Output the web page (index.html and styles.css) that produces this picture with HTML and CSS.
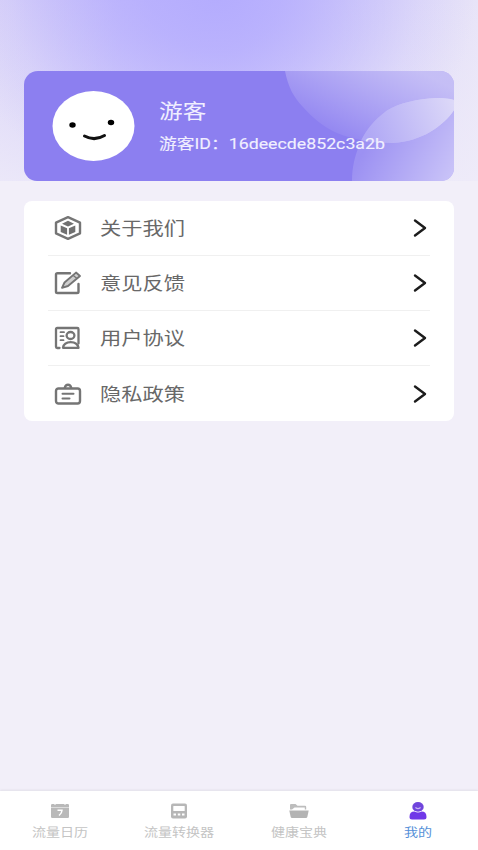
FILE: index.html
```html
<!DOCTYPE html>
<html lang="zh-CN">
<head>
<meta charset="utf-8">
<title>我的</title>
<link rel="stylesheet" href="styles.css">
</head>
<body>
<div class="screen">
  <header class="hero">
    <section class="profile">
      <svg class="profile-art" viewBox="0 0 430 110" preserveAspectRatio="none">
        <defs>
          <linearGradient id="upper" gradientUnits="userSpaceOnUse" x1="330" y1="78" x2="375" y2="-10">
            <stop offset="0" stop-color="#fff" stop-opacity=".04"/>
            <stop offset="1" stop-color="#f2f0fa" stop-opacity=".56"/>
          </linearGradient>
          <linearGradient id="lower" gradientUnits="userSpaceOnUse" x1="345" y1="70" x2="430" y2="115">
            <stop offset="0" stop-color="#fff" stop-opacity=".14"/>
            <stop offset="1" stop-color="#fff" stop-opacity=".56"/>
          </linearGradient>
          <linearGradient id="leaf" gradientUnits="userSpaceOnUse" x1="345" y1="68" x2="430" y2="35">
            <stop offset="0" stop-color="#b0a8f5"/>
            <stop offset="1" stop-color="#dcd8f8"/>
          </linearGradient>
          <clipPath id="upperClip"><path d="M261 0C264 16 270 27 279 36C288 46 299 56 313 62C330 69 350 72 369 72C383 71 396 67 406 61C416 55 425 47 430 39V0Z"/></clipPath>
        </defs>
        <path d="M261 0C264 16 270 27 279 36C288 46 299 56 313 62C330 69 350 72 369 72C383 71 396 67 406 61C416 55 425 47 430 39V0Z" fill="url(#upper)"/>
        <path d="M328 110C328 96 331 85 335 75C340 61 350 49 363 39.500C376 31.500 394 28 412 27C419 27 425 27.500 430 29V110Z" fill="url(#lower)"/>
        <path d="M328 110C328 96 331 85 335 75C340 61 350 49 363 39.500C376 31.500 394 28 412 27C419 27 425 27.500 430 29V110Z" fill="url(#leaf)" clip-path="url(#upperClip)"/>
      </svg>
      <svg class="avatar" viewBox="0 0 82 70">
        <ellipse cx="41" cy="35" rx="41" ry="35" fill="#fff"/>
        <ellipse cx="20" cy="34" rx="3.2" ry="2.8"/>
        <ellipse cx="58.500" cy="31.500" rx="3.200" ry="2.800"/>
        <path d="M32 45Q42 50.500 52 44.500" fill="none" stroke="#111" stroke-width="3" stroke-linecap="round"/>
      </svg>
      <div class="who">
        <div class="name">游客</div>
        <div class="uid">游客ID：16deecde852c3a2b</div>
      </div>
    </section>
  </header>

  <main class="menu">
    <a class="row">
      <svg class="icon" viewBox="0 0 28 26">
        <path d="M14 2.200 26 7.700V18.300L14 23.800 2 18.300V7.700Z" fill="none" stroke="#757575" stroke-width="2.400" stroke-linejoin="round"/>
        <path d="M14 5.800 20 8.700 14 11.600 8 8.700ZM6.700 10.400 13.100 13.200V19.800L6.700 17ZM21.300 10.400 14.900 13.200V19.800L21.300 17Z" fill="#707070"/>
      </svg>
      <span class="label">关于我们</span>
      <svg class="chevron" viewBox="0 0 14 20"><path d="M2 2.500 12 10 2 17.500"/></svg>
    </a>
    <a class="row">
      <svg class="icon" viewBox="0 0 28 26">
        <path d="M16 3.200H3.500Q2 3.200 2 4.500V21.700Q2 23 3.500 23H23Q24.500 23 24.500 21.700V14" fill="none" stroke="#757575" stroke-width="2.400" stroke-linecap="round"/>
        <path d="M8 17.800 10.500 12.500 22 2.600 26 5.900 14 16Z" fill="#cfcfcf" stroke="#757575" stroke-width="1.900" stroke-linejoin="round"/>
        <path d="M19.300 5.500 23 8.500" stroke="#757575" stroke-width="1.300"/>
      </svg>
      <span class="label">意见反馈</span>
      <svg class="chevron" viewBox="0 0 14 20"><path d="M2 2.500 12 10 2 17.500"/></svg>
    </a>
    <a class="row">
      <svg class="icon" viewBox="0 0 28 26">
        <g fill="none" stroke="#757575" stroke-width="2.300" stroke-linecap="round" stroke-linejoin="round">
          <path d="M5.500 23H3.200Q2 23 2 21.800V4.200Q2 3 3.200 3H23.300Q24.500 3 24.500 4.200V18.500"/>
          <ellipse cx="16.500" cy="10.500" rx="3.900" ry="3.500"/>
          <path d="M9 22.800Q10 17.200 16.700 17.200T24.500 22.800Z"/>
          <path d="M6.500 7.200H10M6.500 11.200H9.500M6.500 15.200H9.500" stroke-width="1.800"/>
        </g>
      </svg>
      <span class="label">用户协议</span>
      <svg class="chevron" viewBox="0 0 14 20"><path d="M2 2.500 12 10 2 17.500"/></svg>
    </a>
    <a class="row">
      <svg class="icon" viewBox="0 0 28 26">
        <g fill="none" stroke="#757575" stroke-width="2.400" stroke-linecap="round" stroke-linejoin="round">
          <rect x="2" y="7.500" width="24" height="15" rx="2.400"/>
          <path d="M10.800 6.800Q11.500 3.800 14 3.800T17.200 6.800"/>
          <path d="M8.500 12.800H19.500M8.500 17.500H15.500" stroke-width="2"/>
        </g>
      </svg>
      <span class="label">隐私政策</span>
      <svg class="chevron" viewBox="0 0 14 20"><path d="M2 2.500 12 10 2 17.500"/></svg>
    </a>
  </main>

  <nav class="tabs">
    <a class="tab">
      <svg class="tab-icon" viewBox="0 0 20 18">
        <path d="M1 3.200Q1 2 2.200 2H17.800Q19 2 19 3.200V5H1ZM1 5.500H19V14.800Q19 16 17.800 16H2.200Q1 16 1 14.800Z" fill="#b9b9b9"/>
        <path d="M5 1V3M15 1V3" stroke="#fff" stroke-width="1"/>
        <path d="M7.500 8.200H12Q12 11 9 13.500" fill="none" stroke="#fff" stroke-width="1.500"/>
      </svg>
      <span class="tab-label">流量日历</span>
    </a>
    <a class="tab">
      <svg class="tab-icon" viewBox="0 0 20 18">
        <rect x="2" y="1.500" width="16" height="15" rx="2" fill="#b7b7b7"/>
        <rect x="4.300" y="4" width="11.400" height="5" rx=".5" fill="#fff"/>
        <path d="M4.500 12.500H7M8.800 12.500H11.300M13 12.500H15.500" stroke="#fff" stroke-width="1.800"/>
      </svg>
      <span class="tab-label">流量转换器</span>
    </a>
    <a class="tab">
      <svg class="tab-icon" viewBox="0 0 20 18">
        <path d="M1 7.500V3Q1 2 2 2H6.500L8.500 3.800H16Q17.200 3.800 17.200 5V7.500H15.800V5.400H5.500L3 7.500Z" fill="#bdbdbd"/>
        <path d="M.3 8.400H19.700L18.300 15Q18 16 17 16H3Q2 16 1.700 15Z" fill="#b3b3b3"/>
      </svg>
      <span class="tab-label">健康宝典</span>
    </a>
    <a class="tab active">
      <svg class="tab-icon" viewBox="0 0 20 18">
        <ellipse cx="10" cy="4.900" rx="5.700" ry="4.900" fill="#7045dc"/>
        <path d="M1.500 15Q1.500 9.600 6.500 9.600Q10 11.300 13.500 9.600Q18.500 9.600 18.500 15Q18.500 17.500 16 17.500H4Q1.500 17.500 1.500 15Z" fill="#7038e8"/>
        <path d="M7.800 5.800Q10 7.600 12.200 5.800" fill="none" stroke="#c7b4f5" stroke-width="1.300" stroke-linecap="round"/>
      </svg>
      <span class="tab-label">我的</span>
    </a>
  </nav>
</div>
</body>
</html>
```
FILE: styles.css
```css
* { box-sizing: border-box; }

body {
  margin: 0;
  font-family: Roboto, "Noto Sans CJK SC", sans-serif;
}

.screen {
  display: flex;
  flex-direction: column;
  width: 478px;
  height: 850px;
  overflow: hidden;
  background: #f2eff9;
}

.hero {
  height: 181px;
  padding: 71px 24px 0;
  background:
    radial-gradient(ellipse 260px 210px at 215px 0, rgba(179, 171, 254, .9) 0%, rgba(181, 173, 254, .78) 25%, rgba(184, 176, 253, .46) 52%, rgba(190, 182, 253, .16) 78%, rgba(190, 182, 253, 0) 100%),
    linear-gradient(180deg, rgba(240, 237, 249, 0) 0%, rgba(240, 237, 249, .8) 100%),
    linear-gradient(90deg, #d8d2f8 0%, #c5bdfb 25%, #c3bbfb 50%, #dad5f9 78%, #e8e4f8 100%);
}

.profile {
  position: relative;
  display: flex;
  height: 110px;
  padding: 20px 0 0 28px;
  overflow: hidden;
  border-radius: 14px 14px 13px 13px;
  background: #8c7ff0;
}

.profile-art {
  position: absolute;
  inset: 0;
  width: 430px;
  height: 110px;
}

.avatar {
  flex: none;
  width: 83px;
  height: 70px;
}

.who {
  position: relative;
  margin-left: 23.500px;
  padding-top: 6px;
  color: #f1efff;
  white-space: nowrap;
  transform: scaleX(1.183);
  transform-origin: left;
}

.name {
  font-size: 20px;
  line-height: 30px;
}

.uid {
  margin-top: 6px;
  font-size: 15px;
  line-height: 22px;
  -webkit-text-stroke: .12px;
}

.menu {
  display: grid;
  grid-template-rows: 54px 55px 55px 56px;
  margin: 20px 24px 0;
  padding: 0 24px;
  border-radius: 8px;
  background: #fff;
}

.row {
  display: flex;
  align-items: center;
  padding: 0 3px 0 6px;
}

.row + .row { border-top: 1px solid #f0f0f0; }

.icon {
  width: 28px;
  height: 26px;
}

.label {
  flex: 1;
  margin-left: 18px;
  padding-top: 2px;
  color: #686868;
  font-size: 18px;
  line-height: 26px;
  transform: scaleX(1.18);
  transform-origin: left;
}

.chevron {
  width: 14px;
  height: 20px;
  fill: none;
  stroke: #1c1c1c;
  stroke-width: 2.4;
  stroke-linecap: round;
  stroke-linejoin: round;
}

.tabs {
  display: grid;
  grid-template-columns: repeat(4, 1fr);
  height: 59px;
  margin-top: auto;
  background: #fff;
  box-shadow: 0 -1px 2px rgba(90, 90, 90, .1);
}

.tab {
  display: flex;
  flex-direction: column;
  align-items: center;
  padding-top: 11px;
  color: #c4c4c4;
}

.tab-icon {
  width: 20px;
  height: 18px;
}

.tab-label {
  margin-top: 5px;
  font-size: 12px;
  line-height: 17px;
  white-space: nowrap;
  transform: scaleX(1.17);
}

.active { color: #5590d8; }
```
